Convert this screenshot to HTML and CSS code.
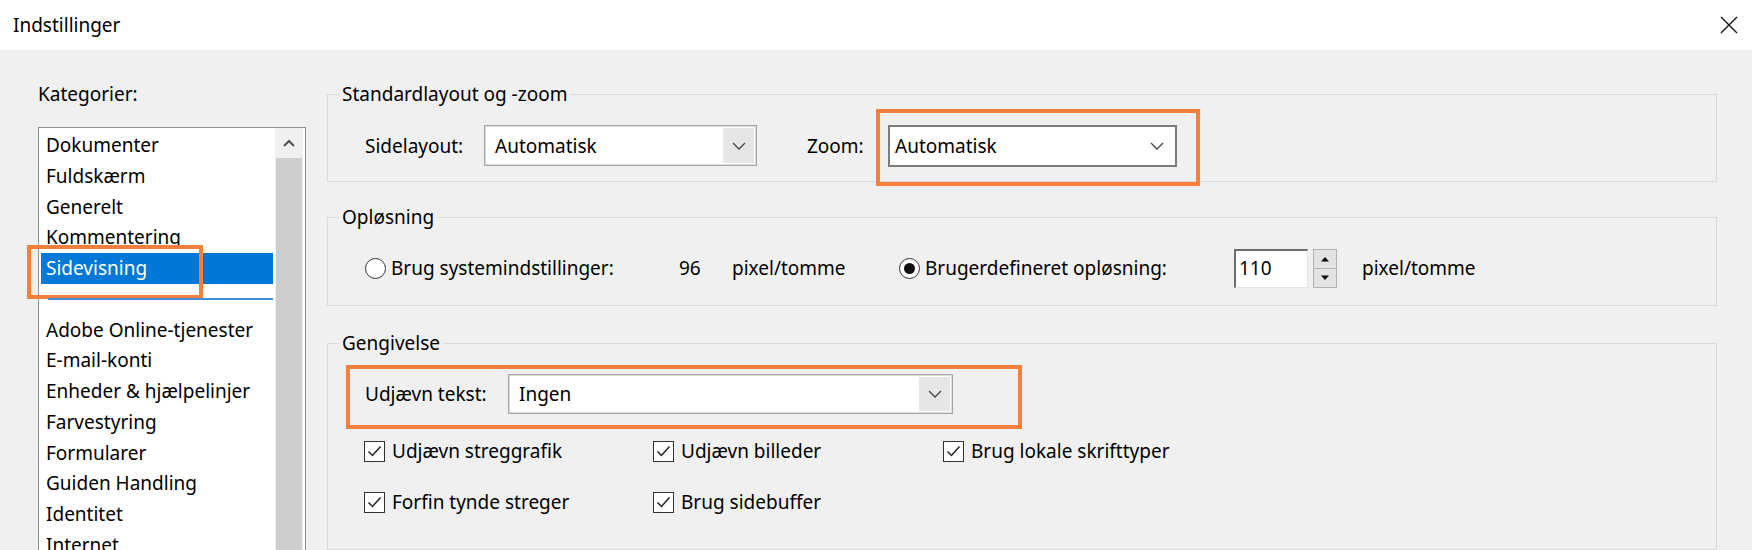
FILE: index.html
```html
<!DOCTYPE html>
<html lang="da">
<head>
<meta charset="utf-8">
<title>Indstillinger</title>
<link rel="stylesheet" href="styles.css">
</head>
<body>
<div class="window">
  <div class="titlebar">
    <span class="title">Indstillinger</span>
    <svg class="close" width="20" height="20" viewBox="0 0 20 20"><path d="M2 2 L18 18 M18 2 L2 18" stroke="#111" stroke-width="1.4" fill="none"/></svg>
  </div>
  <div class="main">
    <div class="cats">
      <div class="cats-label">Kategorier:</div>
      <div class="listbox">
        <ul class="items">
          <li>Dokumenter</li>
          <li>Fuldskærm</li>
          <li>Generelt</li>
          <li>Kommentering</li>
          <li class="selected mark-side">Sidevisning</li>
          <li class="sep"><span class="sep-line"></span></li>
          <li>Adobe Online-tjenester</li>
          <li>E-mail-konti</li>
          <li>Enheder &amp; hjælpelinjer</li>
          <li>Farvestyring</li>
          <li>Formularer</li>
          <li>Guiden Handling</li>
          <li>Identitet</li>
          <li>Internet</li>
        </ul>
        <div class="scrollbar">
          <div class="sb-up"><svg width="14" height="10" viewBox="0 0 14 10"><path d="M2 8 L7 3 L12 8" stroke="#505050" stroke-width="2" fill="none"/></svg></div>
          <div class="sb-thumb"></div>
        </div>
      </div>
    </div>

    <div class="panel">
      <fieldset class="group g1">
        <legend>Standardlayout og -zoom</legend>
        <div class="row">
          <span class="lbl w-sidelayout">Sidelayout:</span>
          <div class="combo w-combo1">
            <span class="combo-text">Automatisk</span>
            <span class="combo-btn"><svg width="14" height="8" viewBox="0 0 14 8"><path d="M1 1 L7 7 L13 1" stroke="#444" stroke-width="1.3" fill="none"/></svg></span>
          </div>
          <span class="lbl w-zoom">Zoom:</span>
          <div class="combo-edit w-combo2 mark mark-zoom">
            <span class="combo-text">Automatisk</span>
            <span class="combo-btn plain"><svg width="14" height="8" viewBox="0 0 14 8"><path d="M1 1 L7 7 L13 1" stroke="#444" stroke-width="1.3" fill="none"/></svg></span>
          </div>
        </div>
      </fieldset>

      <fieldset class="group g2">
        <legend>Opløsning</legend>
        <div class="row">
          <label class="opt w-opt1"><span class="radio"></span><span>Brug systemindstillinger:</span></label>
          <span class="w-96">96</span>
          <span class="w-unit">pixel/tomme</span>
          <label class="opt w-opt2"><span class="radio checked"><span class="dot"></span></span><span>Brugerdefineret opløsning:</span></label>
          <div class="spin">
            <span class="spin-input">110</span>
            <span class="spin-btns">
              <span class="spin-btn"><svg width="10" height="6" viewBox="0 0 10 6"><path d="M1 5.5 L5 1 L9 5.5 Z" fill="#000"/></svg></span>
              <span class="spin-btn"><svg width="10" height="6" viewBox="0 0 10 6"><path d="M1 0.5 L5 5 L9 0.5 Z" fill="#000"/></svg></span>
            </span>
          </div>
          <span class="unit2">pixel/tomme</span>
        </div>
      </fieldset>

      <fieldset class="group g3">
        <legend>Gengivelse</legend>
        <div class="row">
          <div class="smooth-row mark mark-smooth">
            <span class="lbl w-udj">Udjævn tekst:</span>
            <div class="combo w-combo3">
              <span class="combo-text">Ingen</span>
              <span class="combo-btn"><svg width="14" height="8" viewBox="0 0 14 8"><path d="M1 1 L7 7 L13 1" stroke="#444" stroke-width="1.3" fill="none"/></svg></span>
            </div>
          </div>
        </div>
        <div class="checks">
          <label class="chk"><span class="box"><svg width="19" height="19" viewBox="0 0 19 19"><path d="M3.5 9.5 L7.5 13.5 L15.5 4.5" stroke="#222" stroke-width="1.5" fill="none"/></svg></span>Udjævn streggrafik</label>
          <label class="chk"><span class="box"><svg width="19" height="19" viewBox="0 0 19 19"><path d="M3.5 9.5 L7.5 13.5 L15.5 4.5" stroke="#222" stroke-width="1.5" fill="none"/></svg></span>Udjævn billeder</label>
          <label class="chk"><span class="box"><svg width="19" height="19" viewBox="0 0 19 19"><path d="M3.5 9.5 L7.5 13.5 L15.5 4.5" stroke="#222" stroke-width="1.5" fill="none"/></svg></span>Brug lokale skrifttyper</label>
          <label class="chk"><span class="box"><svg width="19" height="19" viewBox="0 0 19 19"><path d="M3.5 9.5 L7.5 13.5 L15.5 4.5" stroke="#222" stroke-width="1.5" fill="none"/></svg></span>Forfin tynde streger</label>
          <label class="chk"><span class="box"><svg width="19" height="19" viewBox="0 0 19 19"><path d="M3.5 9.5 L7.5 13.5 L15.5 4.5" stroke="#222" stroke-width="1.5" fill="none"/></svg></span>Brug sidebuffer</label>
        </div>
      </fieldset>
    </div>
  </div>
</div>
</body>
</html>
```

FILE: styles.css
```css
*, *::before, *::after { box-sizing: border-box; }

html, body {
  margin: 0;
  padding: 0;
}

body {
  width: 1752px;
  height: 550px;
  overflow: hidden;
  background: #f0f0f0;
  font-family: "Noto Sans", "Liberation Sans", sans-serif;
  font-size: 19px;
  color: #000;
}

.window {
  width: 1752px;
  height: 550px;
  display: flex;
  flex-direction: column;
}

/* Title bar */
.titlebar {
  height: 50px;
  flex: none;
  background: #fff;
  display: flex;
  align-items: center;
  justify-content: space-between;
  padding: 0 13px 0 13px;
}

.title {
  line-height: 24px;
}

.close { display: block; }

/* Main area */
.main {
  flex: 1;
  display: flex;
  padding-left: 38px;
  gap: 21px;
  min-height: 0;
}

.cats {
  width: 268px;
  flex: none;
  display: flex;
  flex-direction: column;
}

.cats-label {
  margin-top: 32px;
  line-height: 24px;
}

.listbox {
  margin-top: 21px;
  height: 460px;
  flex: none;
  border: 1px solid #8f8f8f;
  background: #fff;
  display: flex;
}

.items {
  list-style: none;
  margin: 0;
  padding: 2px 2px 0 2px;
  width: 236px;
  flex: none;
}

.items li {
  position: relative;
  height: 30.75px;
  line-height: 30.75px;
  padding-left: 5px;
  white-space: nowrap;
}

.items li.selected {
  background: #0078d7;
  color: #fff;
}

.items li.sep {
  display: flex;
  align-items: center;
  padding-left: 7px;
}

.sep-line {
  display: block;
  width: 100%;
  height: 2px;
  background: #3f8fdc;
}

.scrollbar {
  width: 28px;
  flex: none;
  display: flex;
  flex-direction: column;
  background: #f0f0f0;
}

.sb-up {
  height: 30px;
  display: flex;
  align-items: center;
  justify-content: center;
  background: #f0f0f0;
}

.sb-thumb {
  flex: 1;
  margin: 0 1px;
  background: #cdcdcd;
}

/* Orange annotation boxes */
.mark-side::after,
.mark::after {
  content: "";
  position: absolute;
  border: 4px solid #f5803e;
  pointer-events: none;
}

.mark-side::after {
  left: -14px;
  top: -8px;
  width: 176px;
  height: 54px;
}

.mark { position: relative; }

.mark-zoom::after {
  left: -14px;
  top: -18px;
  right: -25px;
  bottom: -21px;
}

.mark-smooth::after {
  left: -19px;
  top: -9px;
  right: -69px;
  bottom: -15px;
}

/* Right panel */
.panel {
  width: 1390px;
  flex: none;
  display: flex;
  flex-direction: column;
}

.group {
  margin: 0;
  padding: 0;
  border: 1px solid #d9d9d9;
  min-width: 0;
}

.group legend {
  margin-left: 11px;
  padding: 0 3px;
  line-height: 24px;
}

.g1 { margin-top: 32px; }
.g2 { margin-top: 23px; }
.g3 { margin-top: 25px; height: 260px; }

.row {
  display: flex;
  align-items: center;
  padding-left: 37px;
}

.g1 .row { height: 41px; margin: 19px 0 15px 0; }
.g2 .row { height: 40px; margin: 19px 0 17px 0; }
.g3 .row { height: 40px; margin-top: 19px; }

.lbl { flex: none; white-space: nowrap; }
.w-sidelayout { width: 119px; }
.w-zoom { width: 81px; margin-left: 50px; }
.w-udj { width: 143px; }

.combo,
.combo-edit {
  flex: none;
  height: 41px;
  display: flex;
  align-items: center;
  background: #fff;
}

.combo {
  border: 1px solid #a5a5a5;
  box-shadow: inset 0 0 0 1px #dcdcdc;
  padding: 2px;
}

.combo-edit {
  border: 2px solid #7c7c7c;
  height: 42px;
}

.w-combo1 { width: 273px; }
.w-combo2 { width: 289px; }
.w-combo3 { width: 445px; height: 40px; }

.combo-text {
  flex: 1;
  padding-left: 8px;
  white-space: nowrap;
}

.combo-edit .combo-text { padding-left: 5px; }

.combo-btn {
  width: 31px;
  align-self: stretch;
  display: flex;
  align-items: center;
  justify-content: center;
  background: #e6e6e6;
}

.combo-btn.plain {
  background: transparent;
  width: 36px;
}

.smooth-row {
  display: flex;
  align-items: center;
  height: 40px;
}

/* Radios */
.opt {
  display: flex;
  align-items: center;
  gap: 5px;
  flex: none;
  white-space: nowrap;
}

.w-opt1 { width: 314px; }
.w-96 { width: 53px; flex: none; }
.w-unit { width: 167px; flex: none; }
.w-opt2 { width: 335px; }

.radio {
  width: 21px;
  height: 21px;
  border: 1px solid #333;
  border-radius: 50%;
  background: #fff;
  display: flex;
  align-items: center;
  justify-content: center;
  flex: none;
}

.dot {
  width: 11px;
  height: 11px;
  border-radius: 50%;
  background: #111;
}

/* Spin */
.spin {
  display: flex;
  align-items: center;
  gap: 5px;
  flex: none;
}

.spin-input {
  width: 74px;
  height: 39px;
  background: #fff;
  border-style: solid;
  border-width: 2px 1px 1px 2px;
  border-color: #6d6d6d #e3e3e3 #e3e3e3 #6d6d6d;
  padding-left: 3px;
  line-height: 35px;
}

.spin-btns {
  display: flex;
  flex-direction: column;
  width: 24px;
  height: 39px;
}

.spin-btn {
  flex: 1;
  display: flex;
  align-items: center;
  justify-content: center;
  background: #e3e3e3;
  border: 1px solid #b3b3b3;
}

.spin-btn + .spin-btn { border-top: 0; }

.unit2 { margin-left: 25px; white-space: nowrap; }

/* Checkboxes */
.checks {
  display: grid;
  grid-template-columns: 289px 290px auto;
  row-gap: 21px;
  padding-left: 36px;
  margin-top: 22px;
}

.chk {
  display: flex;
  align-items: center;
  gap: 7px;
  height: 30px;
  white-space: nowrap;
}

.box {
  width: 21px;
  height: 21px;
  border: 1px solid #333;
  background: #fff;
  display: flex;
  align-items: center;
  justify-content: center;
  flex: none;
}

.box svg { display: block; }
```
